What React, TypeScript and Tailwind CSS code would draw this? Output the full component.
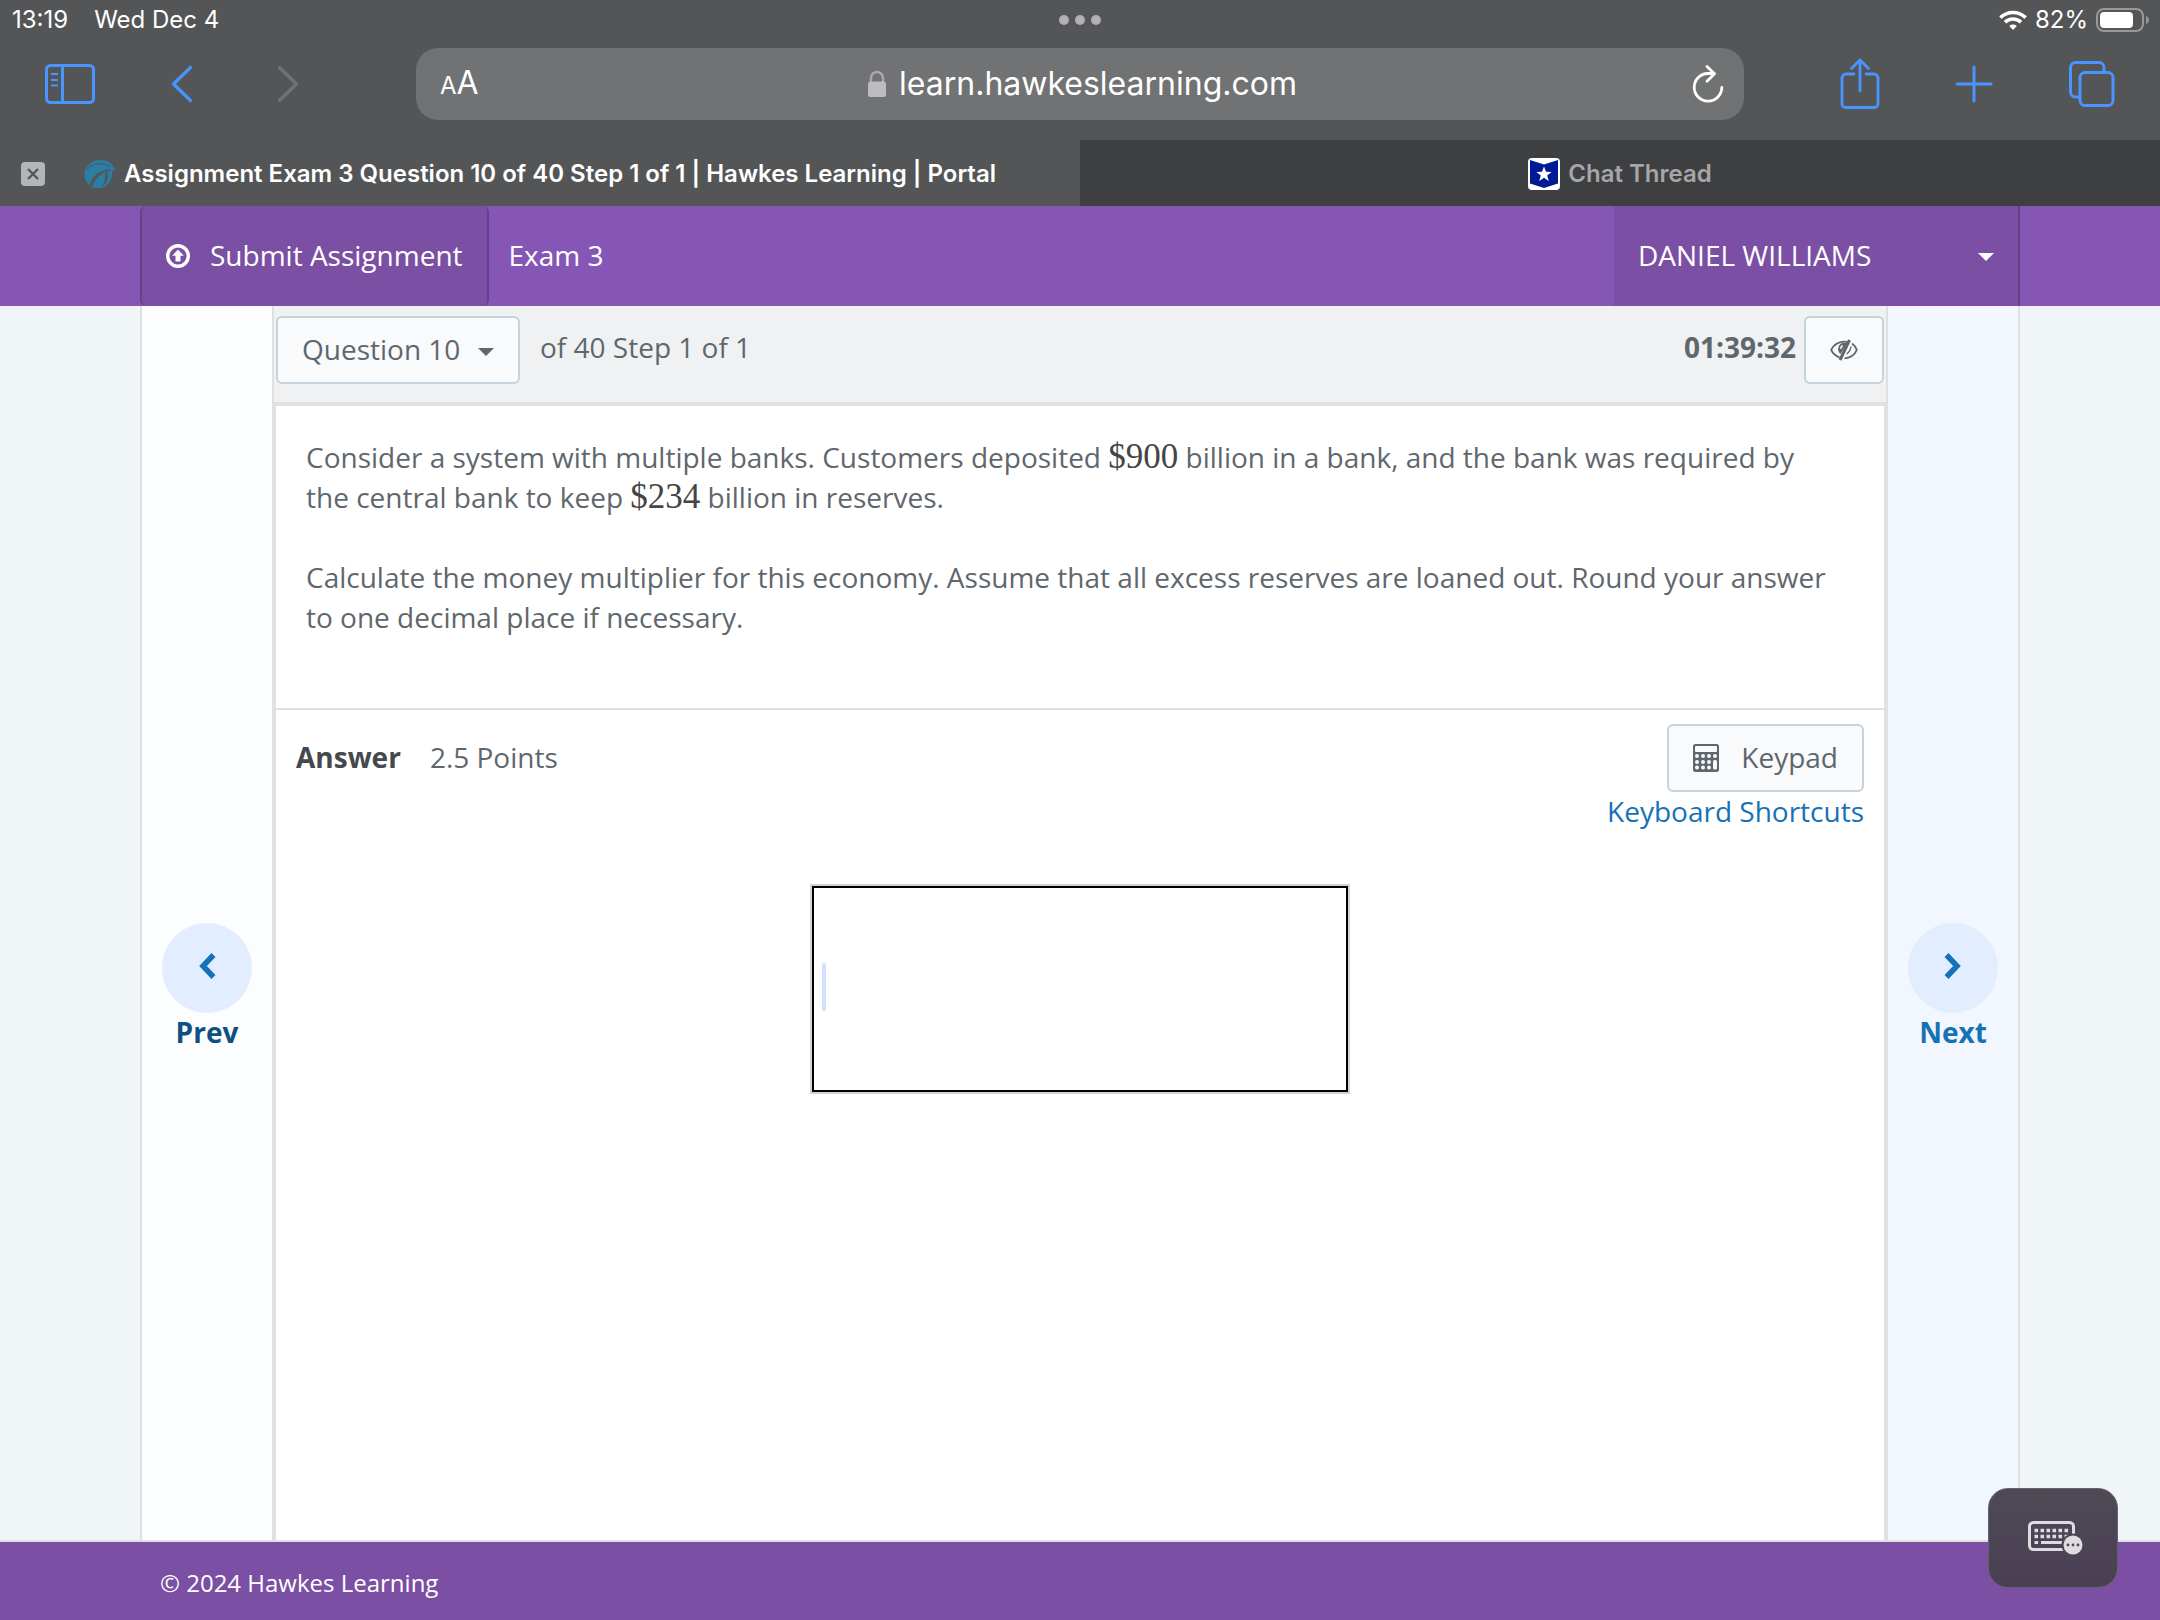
import React from "react";

const chrome = "font-[Inter,'Liberation_Sans',sans-serif]";

function StatusBar() {
  return (
    <div className="grid h-12 grid-cols-3 items-start text-2xl leading-10 text-white">
      <div className="flex gap-[26px] pl-3">
        <span>13:19</span>
        <span>Wed Dec 4</span>
      </div>
      <button type="button" aria-label="Multitasking" className="flex h-10 items-center justify-center gap-1.5">
        <span className="size-2.5 rounded-full bg-[#b0b0b2]" />
        <span className="size-2.5 rounded-full bg-[#b0b0b2]" />
        <span className="size-2.5 rounded-full bg-[#b0b0b2]" />
      </button>
      <div className="flex h-10 items-center justify-end gap-2 pr-2.5">
        <svg width="28" height="20" viewBox="0 0 28 20" aria-hidden="true" fill="none" stroke="white" strokeWidth="3.6">
          <path d="M1.4 7.6a18 18 0 0 1 25.2 0" />
          <path d="M6 12.2a11.5 11.5 0 0 1 16 0" />
          <path d="M14 20l-3.8-4a5.6 5.6 0 0 1 7.6 0z" fill="white" stroke="none" />
        </svg>
        <span>82%</span>
        <svg width="54" height="24" viewBox="0 0 54 24" aria-hidden="true">
          <rect x="1" y="1" width="46" height="22" rx="7" fill="none" stroke="#98989a" strokeWidth="2" />
          <rect x="4" y="4" width="33" height="16" rx="4" fill="white" />
          <path d="M50 8c4 1.4 4 6.600 0 8z" fill="#98989a" />
        </svg>
      </div>
    </div>
  );
}

function BrowserBar() {
  return (
    <div className="flex h-[92px] items-start">
      <div className="flex h-[72px] w-[416px] items-center text-[#4a94ff]">
        <button type="button" aria-label="Sidebar" className="ml-[45px]">
          <svg width="50" height="40" viewBox="0 0 50 40" fill="none" stroke="currentColor" strokeWidth="3">
            <rect x="1.5" y="1.5" width="47" height="37" rx="4" />
            <path d="M17.500 2v36" />
            <path d="M6 10h7M6 16h7M6 21.500h7" strokeWidth="2" />
          </svg>
        </button>
        <button type="button" aria-label="Back" className="ml-[76px]">
          <svg width="22" height="38" viewBox="0 0 22 38" fill="none" stroke="currentColor" strokeWidth="3.200" strokeLinecap="round" strokeLinejoin="round">
            <path d="M19.500 2.500L2.500 19l17 16.500" />
          </svg>
        </button>
        <button type="button" aria-label="Forward" className="ml-[84px] text-[#717274]">
          <svg width="22" height="38" viewBox="0 0 22 38" fill="none" stroke="currentColor" strokeWidth="3.200" strokeLinecap="round" strokeLinejoin="round">
            <path d="M2.500 2.500l17 16.500-17 16.500" />
          </svg>
        </button>
      </div>
      <div className="flex h-[72px] flex-1 items-center justify-between rounded-[22px] bg-[#717273] pr-5 pl-6 text-white">
        <button type="button" aria-label="Page settings" className="w-10 text-left leading-none whitespace-nowrap">
          <span className="text-2xl">A</span>
          <span className="text-[32px]">A</span>
        </button>
        <div className="flex items-center gap-3">
          <svg width="20" height="28" viewBox="0 0 20 28" aria-hidden="true">
            <path d="M4 13V8a6 6 0 0 1 12 0v5" fill="none" stroke="#a9a9ac" strokeWidth="2.500" />
            <rect x="1" y="11.500" width="18" height="15.500" rx="2.500" fill="#bcbcc2" />
          </svg>
          <span className="text-[32px] leading-none">learn.hawkeslearning.com</span>
        </div>
        <button type="button" aria-label="Reload" className="flex w-10 justify-end">
          <svg width="32" height="40" viewBox="0 0 32 40" fill="none" stroke="currentColor" strokeWidth="2.800" strokeLinecap="round" strokeLinejoin="round">
            <path d="M29.800 23.500A13.800 13.800 0 1 1 16 9.500h6" />
            <path d="M15 2.500l7.500 7.200L15 17.200" />
          </svg>
        </button>
      </div>
      <div className="flex h-[72px] w-[416px] items-center text-[#4a94ff]">
        <button type="button" aria-label="Share" className="ml-[96px]">
          <svg width="40" height="52" viewBox="0 0 40 52" fill="none" stroke="currentColor" strokeWidth="2.800" strokeLinecap="round" strokeLinejoin="round">
            <path d="M14 16H6a4 4 0 0 0-4 4v25.500a4 4 0 0 0 4 4h28a4 4 0 0 0 4-4V20a4 4 0 0 0-4-4h-8" />
            <path d="M20 33V2M11.500 10.500L20 2l8.500 8.500" />
          </svg>
        </button>
        <button type="button" aria-label="New tab" className="ml-[75px]">
          <svg width="38" height="38" viewBox="0 0 38 38" fill="none" stroke="currentColor" strokeWidth="3" strokeLinecap="round">
            <path d="M19 2v34M2 19h34" />
          </svg>
        </button>
        <button type="button" aria-label="Tab overview" className="ml-[76px]">
          <svg width="46" height="46" viewBox="0 0 46 46" fill="none" stroke="currentColor" strokeWidth="3" strokeLinejoin="round">
            <path d="M11 36H6.500a5 5 0 0 1-5-5V6.500a5 5 0 0 1 5-5H30a5 5 0 0 1 5 5V11" />
            <rect x="11" y="11.500" width="33" height="33" rx="5" />
          </svg>
        </button>
      </div>
    </div>
  );
}

function TabStrip() {
  return (
    <div className="grid h-[66px] grid-cols-2 text-2xl font-semibold whitespace-nowrap">
      <div className="relative flex items-center justify-center gap-2 pt-0.5 text-white">
        <button type="button" aria-label="Close tab" className="absolute left-5">
          <svg width="26" height="26" viewBox="0 0 26 26" className="block">
            <rect x="1" y="1" width="24" height="24" rx="4" fill="#b4b5b6" />
            <path d="M8 8l10 10M18 8L8 18" stroke="#545556" strokeWidth="2.400" />
          </svg>
        </button>
        <svg width="32" height="30" viewBox="0 0 32 30" aria-hidden="true">
          <path d="M1 11C4 4 10 1 17 1c7 0 12 3 14.500 11-1.500-.8-2.500-1-3.500-1 1.500 8-3 15.500-10 18H9C4 26.500-1.500 19 1 11z" fill="#2a7da3" />
          <path d="M27 10.500C18 10 9 15 5.500 26l2.500 2C11 20 17 13 26.500 12z" fill="#545556" />
          <path d="M23 13.500c2.500 4 .5 10-5.500 14.500 3-5 4.500-9 3.500-13.500z" fill="#545556" />
          <path d="M3 10C8 4.500 17 3 26 7" fill="none" stroke="#47636f" strokeWidth="1.300" />
        </svg>
        <span>Assignment Exam 3 Question 10 of 40 Step 1 of 1 | Hawkes Learning | Portal</span>
      </div>
      <div className="flex items-center justify-center gap-2 bg-[#3e3f41] pt-0.5 text-[#a6a6a8]">
        <svg width="32" height="32" viewBox="0 0 32 32" aria-hidden="true">
          <rect width="32" height="32" rx="4" fill="white" />
          <path d="M2 2l14 4.500L30 2v23.500L16 30 2 25.500z" fill="#001a96" />
          <path d="M16 8.500l2 5.300 5.600.2-4.400 3.500 1.600 5.500-4.800-3.200-4.800 3.200 1.600-5.500L8.400 14l5.600-.2z" fill="white" />
        </svg>
        <span>Chat Thread</span>
      </div>
    </div>
  );
}

function Caret() {
  return (
    <svg width="16" height="8" viewBox="0 0 16 8" aria-hidden="true" fill="currentColor">
      <path d="M0 0h16L8 8z" />
    </svg>
  );
}

function NavBar() {
  return (
    <nav className="bg-[#8656b7] px-[140px] text-[28px] text-white">
      <div className="mx-auto flex h-[100px] max-w-[1880px] items-stretch">
        <button type="button" className="flex items-center gap-5 rounded-md border-x-2 border-[#673f8a] bg-[#7b4fa3] px-6">
          <svg width="24" height="24" viewBox="0 0 24 24" aria-hidden="true">
            <circle cx="12" cy="12" r="10.300" fill="none" stroke="white" strokeWidth="3.400" />
            <path d="M12 5.500l5.800 6.200H14.500v5.800h-5v-5.800H6.200z" fill="white" />
          </svg>
          <span className="pb-0.5">Submit Assignment</span>
        </button>
        <div className="flex items-center pb-0.5 pl-5">Exam 3</div>
        <button type="button" className="ml-auto flex w-[406px] items-center justify-between border-r-2 border-[#673f8a] bg-[#7b4fa3] pr-6 pl-6">
          <span className="pb-0.5">DANIEL WILLIAMS</span>
          <span className="pt-0.5">
            <Caret />
          </span>
        </button>
      </div>
    </nav>
  );
}

function StepButton({ label, color, path }: { label: string; color: string; path: string }) {
  return (
    <div className="flex w-[130px] flex-col">
      <div className="flex-1 basis-0" />
      <div className="flex-1 basis-0">
        <button type="button" className={`flex w-full flex-col items-center text-[28px] leading-[38px] font-bold ${color}`}>
          <span className="flex size-[90px] items-center justify-center rounded-full bg-[#e2eeff] pb-1 text-[#1572b5]">
            <svg width="18" height="28" viewBox="0 0 18 28" aria-hidden="true" fill="none" stroke="currentColor" strokeWidth="5.500">
              <path d={path} />
            </svg>
          </span>
          {label}
        </button>
      </div>
    </div>
  );
}

function Toolbar() {
  return (
    <div className="box-content flex h-[86px] items-start border-b-4 border-[#e0e0e0] bg-[#eff1f3] px-0.5 pt-2.5">
      <div className="relative text-[#5f676d]">
        <select aria-label="Question" defaultValue="10" className="block h-[68px] w-[244px] appearance-none rounded-md border-2 border-[#c4d3dc] bg-[#f8fafc] pb-0.5 pl-6">
          <option value="10">Question 10</option>
        </select>
        <span className="pointer-events-none absolute inset-y-0 right-[26px] flex items-center pt-1">
          <Caret />
        </span>
      </div>
      <div className="pl-5 leading-[62px]">of 40 Step 1 of 1</div>
      <div className="ml-auto pr-2 leading-[62px] font-bold">01:39:32</div>
      <button type="button" aria-label="Hide timer" className="flex h-[68px] w-20 items-center justify-center rounded-md border-2 border-[#c4d3dc] bg-[#f8fafc] text-[#5f676d]">
        <svg width="28" height="22" viewBox="0 0 28 22" fill="none" stroke="currentColor" strokeWidth="1.800">
          <path d="M18.500 3.200C10 1 3.500 5.500 1.200 11c1.500 3.200 4.500 6 8.300 7.300" />
          <path d="M22 4.500c2.500 1.800 4.200 4 4.800 6.500-2 5-7 8.300-12.300 8.300" />
          <path d="M19.500 1L10 21" strokeWidth="3" />
          <path d="M16.500 5C12 3 8.500 6.500 8.800 10.500c.1 1.700.8 3 2 4" fill="currentColor" strokeWidth="1.500" />
          <path d="M12.500 6.500c-1.300.8-1.800 2-1.700 3.500" stroke="#f8fafc" strokeWidth="1.500" />
          <path d="M21 7.500c-.3 3-1.800 5.500-4.300 7.500" strokeWidth="1.400" />
        </svg>
      </button>
    </div>
  );
}

function Amount({ children }: { children: React.ReactNode }) {
  return <span className="font-['Liberation_Serif',serif] text-[35px] leading-none text-[#454545]">{children}</span>;
}

function KeypadIcon() {
  const dots = [
    [2, 12], [8, 12], [14, 12], [20, 12],
    [2, 18], [8, 18], [14, 18],
    [2, 23.5], [8, 23.5], [14, 23.5],
  ];
  return (
    <svg width="26" height="28" viewBox="0 0 26 28" aria-hidden="true">
      <rect width="26" height="28" rx="2.500" fill="#5f676d" />
      <rect x="2" y="2" width="22" height="6" rx="1" fill="#f8fafc" />
      {dots.map(([x, y]) => (
        <rect key={`${x}-${y}`} x={x} y={y - 2} width="4" height="4" rx="2" fill="#f8fafc" />
      ))}
      <rect x="20" y="16" width="4" height="9.500" rx="1.500" fill="#f8fafc" />
    </svg>
  );
}

function AnswerPanel() {
  return (
    <section className="flex-1 px-5 pt-3.5">
      <div className="flex items-start justify-between">
        <div className="flex gap-[29px] leading-[66px]">
          <h2 className="font-bold text-[#45494d]">Answer</h2>
          <span>2.5 Points</span>
        </div>
        <div className="flex flex-col items-end">
          <button type="button" className="flex h-[68px] items-center gap-[22px] rounded-md border-2 border-[#c4d3dc] bg-[#f8fafc] px-6">
            <KeypadIcon />
            <span className="pb-0.5">Keypad</span>
          </button>
          <a href="#shortcuts" className="leading-[38px] text-[#1572b5]">Keyboard Shortcuts</a>
        </div>
      </div>
      <div className="relative mx-auto mt-[54px] w-[540px] border-2 border-[#d3d3d3]">
        <input aria-label="Answer" type="text" className="block h-[206px] w-full border-2 border-black bg-white px-2 outline-none" />
        <span className="pointer-events-none absolute top-0 bottom-1 left-2.5 flex items-center">
          <span className="h-12 w-1 rounded-full bg-[#cfe2ff]" />
        </span>
      </div>
    </section>
  );
}

function KeyboardButton() {
  return (
    <button type="button" aria-label="Keyboard" className="absolute right-[42px] bottom-8 flex h-[100px] w-[130px] items-center justify-center rounded-[20px] border border-[#66636c] bg-linear-to-b from-[#4e4a54] to-[#4a3f54] pl-1">
      <svg width="58" height="36" viewBox="0 0 58 36" aria-hidden="true">
        <rect x="3.500" y="2.500" width="44" height="27" rx="4" fill="none" stroke="#dedbe1" strokeWidth="3" />
        <path d="M8.500 10.500h35" stroke="#dedbe1" strokeWidth="3.600" strokeDasharray="3.600 2.400" />
        <path d="M8.500 16.500h35" stroke="#dedbe1" strokeWidth="3.600" strokeDasharray="3.600 2.400" />
        <path d="M8.500 22.500h3.600M15 22.500h22" stroke="#dedbe1" strokeWidth="3.200" />
        <circle cx="47" cy="25" r="11.500" fill="#4c4552" />
        <circle cx="47" cy="25" r="9.500" fill="#dedbe1" />
        <circle cx="42" cy="25" r="1.400" fill="#4c4552" />
        <circle cx="47" cy="25" r="1.400" fill="#4c4552" />
        <circle cx="52" cy="25" r="1.400" fill="#4c4552" />
      </svg>
    </button>
  );
}

export default function App() {
  return (
    <div className="relative flex min-h-screen flex-col bg-[#f0f5f8] font-['Open_Sans','Noto_Sans',sans-serif]">
      <header className={`bg-[#545556] ${chrome}`}>
        <StatusBar />
        <BrowserBar />
        <TabStrip />
      </header>
      <NavBar />
      <div className="flex flex-1 px-[140px] text-[28px] text-[#5f676d]">
        <div className="mx-auto flex max-w-[1880px] flex-1 border-x-2 border-[#e0e0e0]">
          <div className="flex bg-[#fcfdff]">
            <StepButton label="Prev" color="text-[#0f5080]" path="M15.500 3L5 14l10.500 11" />
          </div>
          <main className="flex flex-1 flex-col border-x-2 border-[#e0e0e0]">
            <Toolbar />
            <div className="flex flex-1 flex-col border-x-2 border-[#e0e0e0] bg-white">
              <section className="min-h-[304px] border-b-2 border-[#e0e0e0] pt-[31px] pr-12 pl-[30px] leading-10">
                <p>
                  Consider a system with multiple banks. Customers deposited <Amount>$900</Amount> billion in a bank, and the bank was required by the central bank to keep <Amount>$234</Amount> billion in reserves.
                </p>
                <p className="mt-10">
                  Calculate the money multiplier for this economy. Assume that all excess reserves are loaned out. Round your answer to one decimal place if necessary.
                </p>
              </section>
              <AnswerPanel />
            </div>
          </main>
          <div className="flex bg-[#f1f6ff]">
            <StepButton label="Next" color="text-[#1572b5]" path="M2.500 3L13 14 2.500 25" />
          </div>
        </div>
      </div>
      <footer className="border-t-2 border-[#e0e0e0] bg-[#7b4fa3] px-[140px] pt-1 text-2xl leading-[74px] text-white">
        <div className="mx-auto max-w-[1880px] px-5">© 2024 Hawkes Learning</div>
      </footer>
      <KeyboardButton />
    </div>
  );
}
